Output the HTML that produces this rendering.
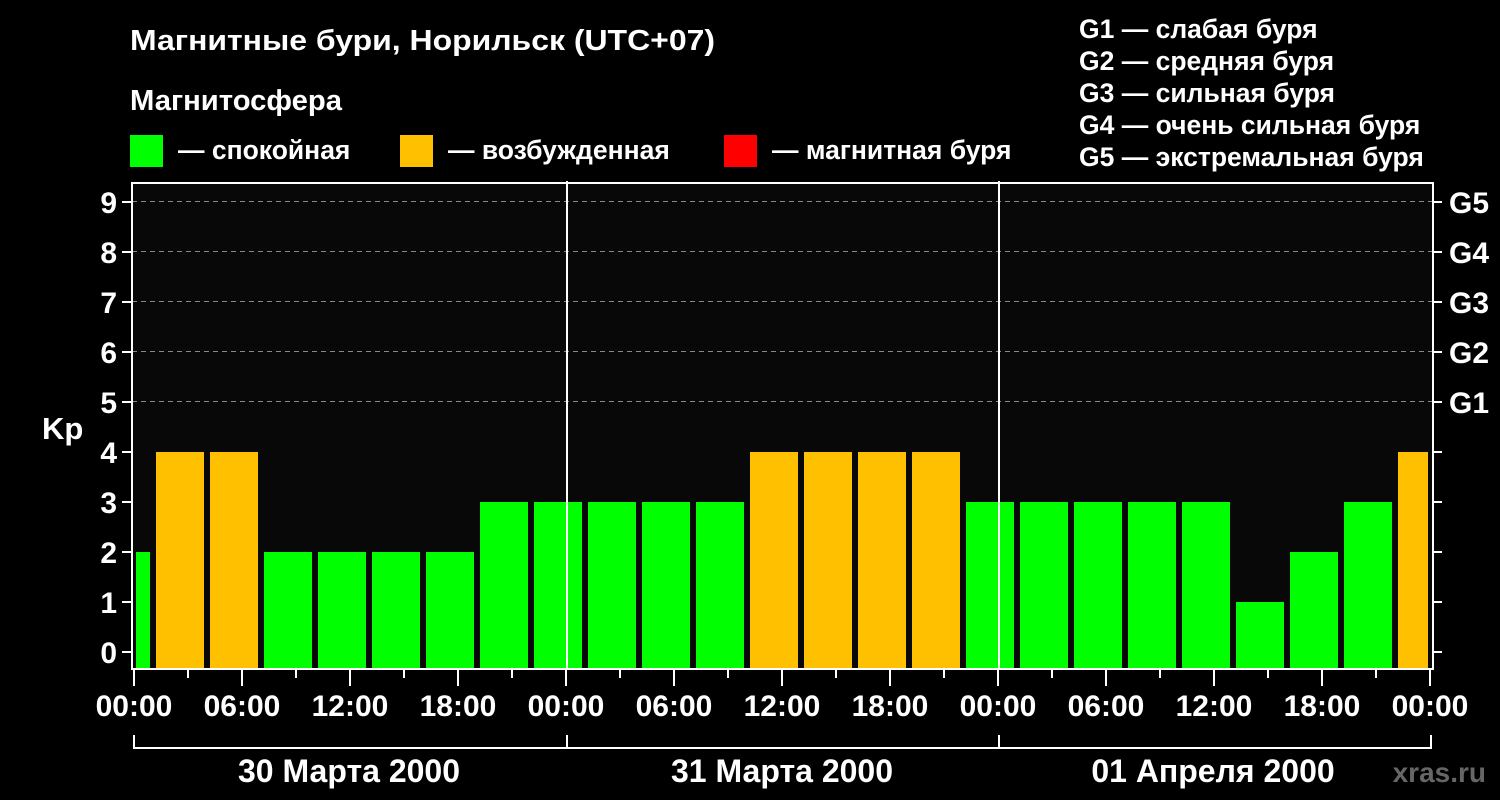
<!DOCTYPE html>
<html><head><meta charset="utf-8"><style>
html,body{margin:0;padding:0;background:#000;}
svg{display:block;}
text{font-family:"Liberation Sans",sans-serif;font-weight:bold;fill:#fff;}
</style></head><body>
<svg width="1500" height="800" viewBox="0 0 1500 800" xmlns="http://www.w3.org/2000/svg">
<rect width="1500" height="800" fill="#000"/>
<text x="130" y="50" font-size="29" textLength="585" lengthAdjust="spacingAndGlyphs">Магнитные бури, Норильск (UTC+07)</text>
<text x="130" y="110" font-size="29" textLength="212" lengthAdjust="spacingAndGlyphs">Магнитосфера</text>
<rect x="130" y="135" width="33" height="32" fill="#00ff00"/>
<text x="178" y="159" font-size="26.5">— спокойная</text>
<rect x="400" y="135" width="33" height="32" fill="#ffc000"/>
<text x="448" y="159" font-size="26.5">— возбужденная</text>
<rect x="724" y="135" width="33" height="32" fill="#ff0000"/>
<text x="772" y="159" font-size="26.5">— магнитная буря</text>
<g font-size="26.5">
<text x="1079" y="38">G1 — слабая буря</text>
<text x="1079" y="70">G2 — средняя буря</text>
<text x="1079" y="102">G3 — сильная буря</text>
<text x="1079" y="134">G4 — очень сильная буря</text>
<text x="1079" y="166">G5 — экстремальная буря</text>
</g>
<rect x="131" y="183" width="1302" height="486" fill="#080808"/>
<g stroke="#888" stroke-width="1" stroke-dasharray="5,4">
<line x1="132" y1="201.5" x2="1432" y2="201.5"/>
<line x1="132" y1="251.5" x2="1432" y2="251.5"/>
<line x1="132" y1="301.5" x2="1432" y2="301.5"/>
<line x1="132" y1="351.5" x2="1432" y2="351.5"/>
<line x1="132" y1="401.5" x2="1432" y2="401.5"/>
</g>
<g id="bars"></g>
<g stroke="#fff" stroke-width="2" fill="none">
<line x1="567" y1="181" x2="567" y2="669"/>
<line x1="999" y1="181" x2="999" y2="669"/>
<rect x="132" y="183" width="1301" height="486"/>
</g>
<g id="ticks" stroke="#fff" stroke-width="2"></g>
<g font-size="30" text-anchor="end">
<text x="117" y="663">0</text><text x="117" y="613">1</text><text x="117" y="563">2</text>
<text x="117" y="513">3</text><text x="117" y="463">4</text><text x="117" y="413">5</text>
<text x="117" y="363">6</text><text x="117" y="313">7</text><text x="117" y="263">8</text>
<text x="117" y="213">9</text>
</g>
<text x="42" y="439" font-size="31">Kp</text>
<g font-size="30">
<text x="1449" y="413">G1</text><text x="1449" y="363">G2</text><text x="1449" y="313">G3</text>
<text x="1449" y="263">G4</text><text x="1449" y="213">G5</text>
</g>
<g font-size="30" text-anchor="middle" id="xl"></g>
<g stroke="#fff" stroke-width="2" fill="none">
<polyline points="134,735 134,748 1431,748 1431,735"/>
<line x1="567" y1="735" x2="567" y2="748"/>
<line x1="999" y1="735" x2="999" y2="748"/>
</g>
<g font-size="32" text-anchor="middle">
<text x="349" y="782">30 Марта 2000</text>
<text x="782" y="782">31 Марта 2000</text>
<text x="1213" y="782">01 Апреля 2000</text>
</g>
<text x="1486" y="782" font-size="28" text-anchor="end" style="fill:#666">xras.ru</text>
</svg>
<script>
var v=[2,4,4,2,2,2,2,3,3,3,3,3,4,4,4,4,3,3,3,3,3,1,2,3,4];
var ns="http://www.w3.org/2000/svg",b=document.getElementById('bars');
v.forEach(function(k,i){var x0=Math.max(102+54*i,136),x1=Math.min(150+54*i,1428);
var r=document.createElementNS(ns,'rect');r.setAttribute('x',x0);r.setAttribute('width',x1-x0);
var y=652-50*k;r.setAttribute('y',y);r.setAttribute('height',668-y);
r.setAttribute('fill',k>=4?'#ffc000':'#00ff00');b.appendChild(r);});
var t=document.getElementById('ticks');
function L(a,b2,c,d){var l=document.createElementNS(ns,'line');l.setAttribute('x1',a);l.setAttribute('y1',b2);l.setAttribute('x2',c);l.setAttribute('y2',d);t.appendChild(l);}
for(var k=0;k<=9;k++){var y=652-50*k;L(122,y,131,y);L(1433,y,1442,y);}
for(var i=0;i<=24;i++){var x=134+54*i;L(x,669,x,i%2==0?686:678);}
var xl=document.getElementById('xl'),lb=['00:00','06:00','12:00','18:00'];
for(var i=0;i<=12;i++){var tx=document.createElementNS(ns,'text');tx.setAttribute('x',134+108*i);tx.setAttribute('y',716);tx.textContent=lb[i%4];xl.appendChild(tx);}
</script>
</body></html>
